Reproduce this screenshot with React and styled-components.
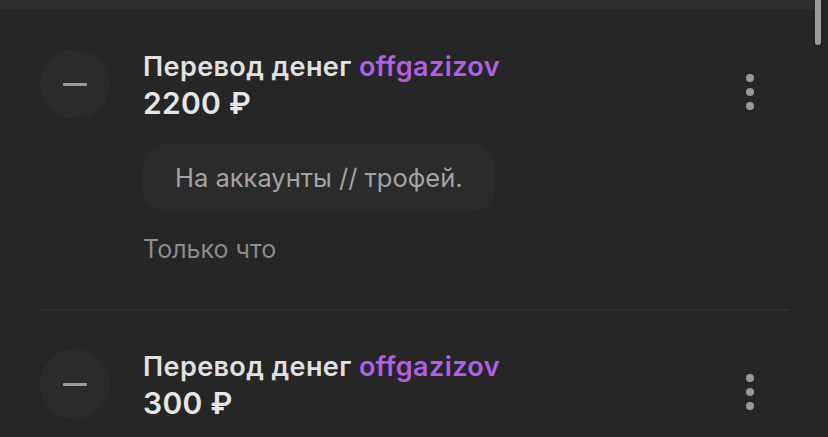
import React from "react";
import styled, { createGlobalStyle } from "styled-components";

const Global = createGlobalStyle`
  html, body { margin: 0; padding: 0; background: #262626; overflow: hidden; }
  body { font-family: Inter, "Noto Sans", sans-serif; -webkit-font-smoothing: antialiased; }
`;

const Page = styled.div`
  position: relative;
  width: 828px;
  height: 437px;
  background: #262626;
  overflow: hidden;
`;

const TopStrip = styled.div`
  height: 10px;
  margin-right: 14px;
  background: #2d2d2d;
  border-bottom: 1px solid #232323;
`;

const Scrollbar = styled.div`
  position: absolute;
  top: 0;
  right: 7px;
  width: 6px;
  height: 45px;
  border-radius: 0 0 3px 3px;
  background: #9b9b9b;
`;

const List = styled.div`
  padding: 0 40px;
  display: flex;
  flex-direction: column;
`;

const Item = styled.div`
  padding-top: 39px;
  padding-bottom: ${(p) => (p.$last ? 0 : 44)}px;
  border-bottom: ${(p) => (p.$last ? "none" : "2px solid #303030")};
`;

const Row = styled.div`
  display: flex;
  align-items: flex-start;
`;

const Avatar = styled.div`
  width: 70px;
  height: 70px;
  flex: none;
  border-radius: 50%;
  background: #2b2b2b;
  display: flex;
  align-items: center;
  justify-content: center;
  margin-top: -1px;
  &::before {
    content: "";
    width: 24px;
    height: 3px;
    border-radius: 1px;
    background: #9c9c9c;
  }
`;

const Body = styled.div`
  flex: 1;
  margin-left: 33px;
  display: flex;
  flex-direction: column;
`;

const Title = styled.div`
  font-size: 27px;
  font-weight: 600;
  color: #e1e1e1;
  line-height: 34px;
  letter-spacing: 0.4px;
`;

const Nick = styled.span`
  color: #b45ee8;
`;

const Amount = styled.div`
  font-size: 30px;
  font-weight: 600;
  color: #e6e6e6;
  line-height: 38px;
  letter-spacing: 0.3px;
`;

const Comment = styled.div`
  align-self: flex-start;
  margin-top: 22px;
  padding: 18px 32px;
  border-radius: 22px;
  background: #2b2b2b;
  font-size: 25.5px;
  color: #a3a3a3;
  line-height: 31px;
`;

const Time = styled.div`
  margin-top: 23px;
  font-size: 25px;
  color: #8b8b8b;
  line-height: 31px;
`;

const Dots = styled.div`
  flex: none;
  margin: 24px 34px 0 0;
  display: flex;
  flex-direction: column;
  gap: 6px;
  span {
    width: 8px;
    height: 8px;
    border-radius: 50%;
    background: #9a9a9a;
  }
`;

const items = [
  { amount: "2200 ₽", comment: "На аккаунты // трофей.", time: "Только что" },
  { amount: "300 ₽", last: true },
];

export default function App() {
  return (
    <Page>
      <Global />
      <TopStrip />
      <Scrollbar />
      <List>
        {items.map((it, i) => (
          <Item key={i} $last={it.last}>
            <Row>
              <Avatar />
              <Body>
                <Title>
                  Перевод денег <Nick>offgazizov</Nick>
                </Title>
                <Amount>{it.amount}</Amount>
                {it.comment && <Comment>{it.comment}</Comment>}
                {it.time && <Time>{it.time}</Time>}
              </Body>
              <Dots>
                <span />
                <span />
                <span />
              </Dots>
            </Row>
          </Item>
        ))}
      </List>
    </Page>
  );
}
